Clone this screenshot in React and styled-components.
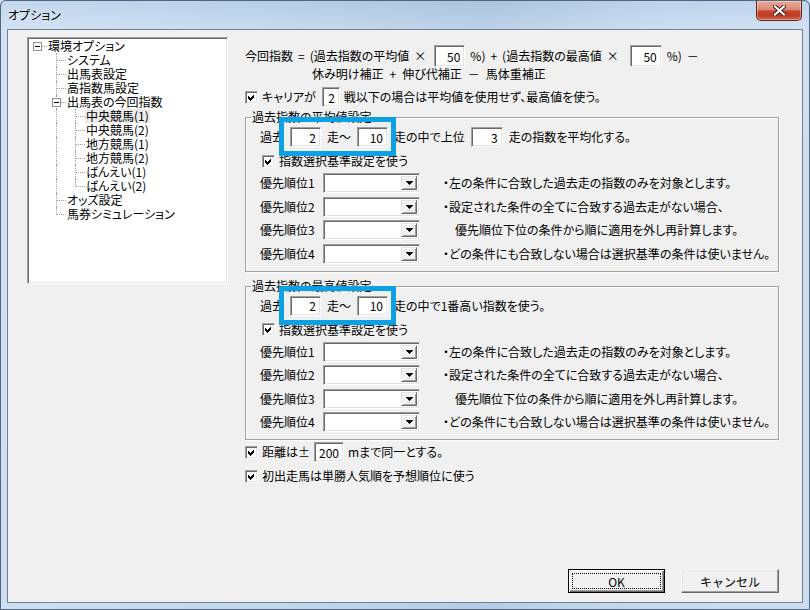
import React from 'react';
import styled, { createGlobalStyle, css } from 'styled-components';

const GlobalStyle = createGlobalStyle`
  html, body { margin: 0; padding: 0; }
  body {
    font-family: "Noto Sans CJK JP", "Noto Sans", sans-serif;
    font-size: 12px;
    line-height: 14px;
    color: #000;
    background: #c7daee;
    font-feature-settings: "palt";
  }
  * { box-sizing: border-box; }
`;

// window chrome
const Window = styled.div`
  width: 810px;
  height: 610px;
  display: flex;
  flex-direction: column;
  padding: 0 6px 6px;
  border: 1px solid #52667f;
  border-radius: 6px 6px 0 0;
  background:
    linear-gradient(90deg, rgba(255,255,255,0.18) 0%, rgba(255,255,255,0) 30%, rgba(70,100,140,0.10) 60%, rgba(255,255,255,0.05) 80%, rgba(255,255,255,0.15) 100%),
    linear-gradient(180deg, #b7cfe9 0px, #c8dbf0 26px, #c4d8ee 100%);
`;

const TitleBar = styled.div`
  height: 28px;
  flex: none;
  display: flex;
  justify-content: space-between;
  align-items: flex-start;
`;

const Caption = styled.span`
  margin: 7px 0 0 1px;
  font-size: 12px;
  line-height: 14px;
  text-shadow: 0 0 6px rgba(255, 255, 255, 0.9);
`;

const CloseBtn = styled.div`
  width: 46px;
  height: 20px;
  margin-right: 1px;
  display: flex;
  align-items: center;
  justify-content: center;
  border: 1px solid #5e2a20;
  border-top: none;
  border-radius: 0 0 5px 5px;
  background: linear-gradient(180deg, #e8a897 0%, #dc8b77 45%, #c7462f 52%, #c03a24 75%, #d36a50 100%);
  box-shadow: inset 0 0 0 1px rgba(255, 255, 255, 0.35);
`;

const Client = styled.div`
  flex: 1;
  display: flex;
  background: #f0f0f0;
  border: 1px solid #6e8197;
  padding: 7px 23px 9px 19px;
`;

// tree
const Tree = styled.div`
  flex: none;
  width: 201px;
  height: 247px;
  background: #fff;
  border: 1px solid;
  border-color: #a0a0a0 #fff #fff #a0a0a0;
  box-shadow: inset 1px 1px #696969, inset -1px -1px #e3e3e3;
  padding-top: 1px;
`;

const TreeRow = styled.div`
  display: flex;
  height: 14px;
  white-space: nowrap;
`;

const Guide = styled.span`
  position: relative;
  flex: none;
  width: 19px;
  height: 14px;
  ${p => ['line', 'tee', 'teebox'].includes(p.$kind) && css`
    &::before {
      content: '';
      position: absolute;
      left: 9px;
      top: 0;
      bottom: 0;
      border-left: 1px dotted #a0a0a0;
    }
  `}
  ${p => p.$kind === 'elbow' && css`
    &::before {
      content: '';
      position: absolute;
      left: 9px;
      top: 0;
      height: 8px;
      border-left: 1px dotted #a0a0a0;
    }
  `}
  ${p => ['tee', 'elbow', 'teebox', 'box'].includes(p.$kind) && css`
    &::after {
      content: '';
      position: absolute;
      left: 10px;
      right: 0;
      top: 7px;
      border-top: 1px dotted #a0a0a0;
    }
  `}
`;

const Expander = styled.span`
  position: absolute;
  left: 5px;
  top: 3px;
  width: 9px;
  height: 9px;
  z-index: 1;
  background: #fff;
  border: 1px solid #919191;
  &::after {
    content: '';
    position: absolute;
    left: 1px;
    top: 3px;
    width: 5px;
    height: 1px;
    background: #000;
  }
`;

const TreeLabel = styled.span`
  padding: 0 1px;
  line-height: 14px;
  background: ${p => (p.$active ? '#ebebeb' : 'transparent')};
`;

// right side
const Pane = styled.div`
  flex: 1;
  margin-left: 17px;
  padding-top: 8px;
  display: flex;
  flex-direction: column;
`;

const Line = styled.div`
  display: flex;
  align-items: center;
  height: ${p => p.$h || 20}px;
  gap: ${p => (p.$gap == null ? 6 : p.$gap)}px;
  margin-top: ${p => p.$mt || 0}px;
  padding-left: ${p => p.$pl || 0}px;
  white-space: nowrap;
`;

const Field = styled.input.attrs({ readOnly: true })`
  flex: none;
  width: ${p => p.$w}px;
  height: ${p => p.$h || 20}px;
  margin: 0 0 0 ${p => p.$ml || 0}px;
  padding: 0 4px 0 0;
  font-family: "Noto Sans CJK JP", sans-serif;
  font-size: 12px;
  text-align: right;
  color: #000;
  background: #fff;
  border: 1px solid;
  border-color: #a0a0a0 #fff #fff #a0a0a0;
  box-shadow: inset 1px 1px #696969, inset -1px -1px #e3e3e3;
  outline: none;
`;

const Box = styled.span`
  flex: none;
  width: 13px;
  height: 13px;
  display: inline-flex;
  align-items: center;
  justify-content: center;
  background: #fff;
  border: 1px solid;
  border-color: #a0a0a0 #fff #fff #a0a0a0;
  box-shadow: inset 1px 1px #696969, inset -1px -1px #e3e3e3;
`;

const Check = () => (
  <Box>
    <svg width="7" height="7" viewBox="0 0 7 7" shapeRendering="crispEdges">
      <polygon points="0,2 2,4 6,0 6,3 2,7 0,5" fill="#000" />
    </svg>
  </Box>
);

const Group = styled.div`
  position: relative;
  margin-top: ${p => p.$mt || 0}px;
  border: 1px solid #a0a0a0;
  box-shadow: 1px 1px 0 #fff, inset 1px 1px 0 #fff;
  padding: 9px 0 7px 14px;
  display: flex;
  flex-direction: column;
`;

const GroupTitle = styled.span`
  position: absolute;
  top: -8px;
  left: 5px;
  padding: 0 1px;
  line-height: 14px;
  background: #f0f0f0;
`;

const Highlight = styled.span`
  position: relative;
  display: flex;
  align-items: center;
  gap: 6px;
  &::after {
    content: '';
    position: absolute;
    left: -11px;
    right: -8px;
    top: -10px;
    bottom: -9px;
    border: 5px solid #0ba1e4;
    z-index: 2;
    pointer-events: none;
  }
`;

const PrioList = styled.div`
  display: flex;
  flex-direction: column;
  gap: 3.5px;
  margin-top: 4px;
`;

const PrioRow = styled.div`
  display: flex;
  align-items: center;
  height: 20px;
  white-space: nowrap;
`;

const PrioLabel = styled.span`
  width: 63px;
  flex: none;
`;

const Combo = styled.div`
  flex: none;
  width: 97px;
  height: 20px;
  display: flex;
  justify-content: flex-end;
  padding: 2px;
  background: #fff;
  border: 1px solid;
  border-color: #a0a0a0 #fff #fff #a0a0a0;
  box-shadow: inset 1px 1px #696969, inset -1px -1px #e3e3e3;
`;

const DropBtn = styled.span`
  width: 16px;
  height: 14px;
  display: flex;
  align-items: center;
  justify-content: center;
  background: #f0f0f0;
  border: 1px solid;
  border-color: #e3e3e3 #696969 #696969 #e3e3e3;
  box-shadow: inset 1px 1px #fff, inset -1px -1px #a0a0a0;
`;

const Note = styled.span`
  margin-left: 23px;
`;

const Buttons = styled.div`
  margin-top: auto;
  display: flex;
  justify-content: flex-end;
  gap: 16px;
`;

const Btn = styled.button`
  position: relative;
  width: ${p => p.$w}px;
  height: 24px;
  padding: 0;
  font-family: "Noto Sans CJK JP", sans-serif;
  font-size: 12px;
  color: #000;
  background: #f0f0f0;
  border: 1px solid;
  border-color: #fff #696969 #696969 #fff;
  box-shadow: inset -1px -1px #a0a0a0, inset 1px 1px #e3e3e3;
  ${p => p.$default && css`
    border-color: #000;
    box-shadow: inset 1px 1px #fff, inset -1px -1px #696969, inset -2px -2px #a0a0a0;
    &::after {
      content: '';
      position: absolute;
      inset: 3px;
      border: 1px dotted #000;
    }
  `}
`;

const treeRows = [
  { label: '環境オプション', guides: ['box'] },
  { label: 'システム', guides: ['', 'tee'] },
  { label: '出馬表設定', guides: ['', 'tee'] },
  { label: '高指数馬設定', guides: ['', 'tee'] },
  { label: '出馬表の今回指数', guides: ['', 'teebox'] },
  { label: '中央競馬(1)', guides: ['', 'line', 'tee'], active: true },
  { label: '中央競馬(2)', guides: ['', 'line', 'tee'] },
  { label: '地方競馬(1)', guides: ['', 'line', 'tee'] },
  { label: '地方競馬(2)', guides: ['', 'line', 'tee'] },
  { label: 'ばんえい(1)', guides: ['', 'line', 'tee'] },
  { label: 'ばんえい(2)', guides: ['', 'line', 'elbow'] },
  { label: 'オッズ設定', guides: ['', 'tee'] },
  { label: '馬券シミュレーション', guides: ['', 'elbow'] },
];

const notes = [
  '・左の条件に合致した過去走の指数のみを対象とします。',
  '・設定された条件の全てに合致する過去走がない場合、',
  '　優先順位下位の条件から順に適用を外し再計算します。',
  '・どの条件にも合致しない場合は選択基準の条件は使いません。',
];

function Arrow() {
  return (
    <svg width="7" height="4" viewBox="0 0 7 4" shapeRendering="crispEdges">
      <polygon points="0,0 7,0 3.5,4" fill="#000" />
    </svg>
  );
}

function Priorities() {
  return (
    <PrioList>
      {notes.map((n, i) => (
        <PrioRow key={i}>
          <PrioLabel>優先順位{i + 1}</PrioLabel>
          <Combo>
            <DropBtn><Arrow /></DropBtn>
          </Combo>
          <Note>{n}</Note>
        </PrioRow>
      ))}
    </PrioList>
  );
}

export default function App() {
  return (
    <>
      <GlobalStyle />
      <Window>
        <TitleBar>
          <Caption>オプション</Caption>
          <CloseBtn>
            <svg width="13" height="11" viewBox="0 0 13 11">
              <path d="M2 1.5 L11 9.5 M11 1.5 L2 9.5" stroke="#3a1b16" strokeWidth="4" strokeLinecap="square" />
              <path d="M2 1.5 L11 9.5 M11 1.5 L2 9.5" stroke="#fff" strokeWidth="2.2" strokeLinecap="square" />
            </svg>
          </CloseBtn>
        </TitleBar>
        <Client>
          <Tree>
            {treeRows.map(r => (
              <TreeRow key={r.label}>
                {r.guides.map((g, i) => (
                  <Guide key={i} $kind={g}>
                    {(g === 'box' || g === 'teebox') && <Expander />}
                  </Guide>
                ))}
                <TreeLabel $active={r.active}>{r.label}</TreeLabel>
              </TreeRow>
            ))}
          </Tree>

          <Pane>
            <Line $h={22} $gap={5}>
              <span>今回指数</span>
              <span>=</span>
              <span>(過去指数の平均値</span>
              <span>×</span>
              <Field $w={31} $h={22} $ml={3} defaultValue="50" />
              <span>%)</span>
              <span>+</span>
              <span>(過去指数の最高値</span>
              <span>×</span>
              <Field $w={32} $h={22} $ml={6} defaultValue="50" />
              <span>%)</span>
              <span>－</span>
            </Line>
            <Line $h={13} $pl={67} $gap={6}>
              <span>休み明け補正</span>
              <span>+</span>
              <span>伸び代補正</span>
              <span>－</span>
              <span>馬体重補正</span>
            </Line>
            <Line $mt={7} $gap={4}>
              <Check />
              <span>キャリアが</span>
              <Field $w={18} $ml={2} defaultValue="2" />
              <span>戦以下の場合は平均値を使用せず、最高値を使う。</span>
            </Line>

            <Group $mt={10}>
              <GroupTitle>過去指数の平均値設定</GroupTitle>
              <Line>
                <span>過去</span>
                <Highlight>
                  <Field $w={31} defaultValue="2" />
                  <span>走～</span>
                  <Field $w={31} defaultValue="10" />
                </Highlight>
                <span>走の中で上位</span>
                <Field $w={32} defaultValue="3" />
                <span>走の指数を平均化する。</span>
              </Line>
              <Line $h={16} $mt={6} $gap={4} $pl={2}>
                <Check />
                <span>指数選択基準設定を使う</span>
              </Line>
              <Priorities />
            </Group>

            <Group $mt={14}>
              <GroupTitle>過去指数の最高値設定</GroupTitle>
              <Line>
                <span>過去</span>
                <Highlight>
                  <Field $w={31} defaultValue="2" />
                  <span>走～</span>
                  <Field $w={31} defaultValue="10" />
                </Highlight>
                <span>走の中で1番高い指数を使う。</span>
              </Line>
              <Line $h={16} $mt={6} $gap={4} $pl={2}>
                <Check />
                <span>指数選択基準設定を使う</span>
              </Line>
              <Priorities />
            </Group>

            <Line $mt={2} $gap={4}>
              <Check />
              <span>距離は±</span>
              <Field $w={30} defaultValue="200" />
              <span>mまで同一とする。</span>
            </Line>
            <Line $h={16} $mt={6} $gap={4}>
              <Check />
              <span>初出走馬は単勝人気順を予想順位に使う</span>
            </Line>

            <Buttons>
              <Btn $w={97} $default>OK</Btn>
              <Btn $w={98}>キャンセル</Btn>
            </Buttons>
          </Pane>
        </Client>
      </Window>
    </>
  );
}
